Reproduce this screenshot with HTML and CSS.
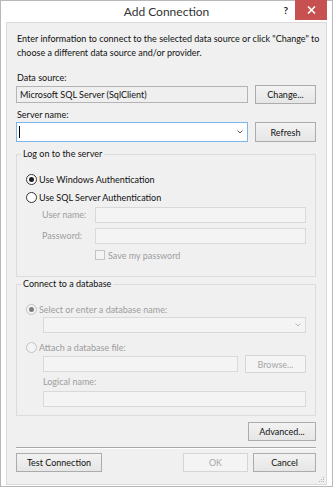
FILE: index.html
```html
<!DOCTYPE html>
<html lang="en">
<head>
    <meta charset="UTF-8">
    <title>Add Connection</title>
    <link rel="stylesheet" href="styles.css">
</head>
<body>
    <div class="window">
        <div class="titlebar">
            <div class="title">Add Connection</div>
            <div class="controls">
                <div class="help">?</div>
                <div class="close">
                    <svg width="9" height="8" viewBox="0 0 9 8"><path d="M1 0.5 L8 7.5 M8 0.5 L1 7.5" stroke="#fff" stroke-width="1.6"/></svg>
                </div>
            </div>
        </div>

        <div class="client">
            <p class="intro">Enter information to connect to the selected data source or click "Change" to<br>choose a different data source and/or provider.</p>

            <div class="label top-label">Data source:</div>
            <div class="row">
                <div class="textbox readonly">Microsoft SQL Server (SqlClient)</div>
                <button class="btn side-btn">Change...</button>
            </div>

            <div class="label server-label">Server name:</div>
            <div class="row server-row">
                <div class="combo focused">
                    <span class="caret"></span>
                    <svg class="chevron" width="6" height="4" viewBox="0 0 6 4"><path d="M0.5 0.5 L3 3 L5.5 0.5" fill="none" stroke="#555" stroke-width="1"/></svg>
                </div>
                <button class="btn side-btn">Refresh</button>
            </div>

            <fieldset class="group logon">
                <legend>Log on to the server</legend>
                <div class="group-body">
                    <div class="radio-row"><span class="radio checked"></span>Use Windows Authentication</div>
                    <div class="radio-row"><span class="radio"></span>Use SQL Server Authentication</div>
                    <div class="field-row user-row">
                        <span class="field-label disabled">User name:</span>
                        <div class="textbox disabled-box"></div>
                    </div>
                    <div class="field-row pass-row">
                        <span class="field-label disabled">Password:</span>
                        <div class="textbox disabled-box"></div>
                    </div>
                    <div class="check-row disabled"><span class="checkbox"></span>Save my password</div>
                </div>
            </fieldset>

            <fieldset class="group database">
                <legend>Connect to a database</legend>
                <div class="group-body">
                    <div class="radio-row short disabled"><span class="radio checked off"></span>Select or enter a database name:</div>
                    <div class="combo disabled-box indent">
                        <svg class="chevron" width="6" height="4" viewBox="0 0 6 4"><path d="M0.5 0.5 L3 3 L5.5 0.5" fill="none" stroke="#b5b5b5" stroke-width="1"/></svg>
                    </div>
                    <div class="radio-row short attach disabled"><span class="radio off"></span>Attach a database file:</div>
                    <div class="row indent file-row">
                        <div class="textbox disabled-box"></div>
                        <button class="btn browse-btn" disabled>Browse...</button>
                    </div>
                    <div class="label indent logical-label disabled">Logical name:</div>
                    <div class="textbox disabled-box indent logical-box"></div>
                </div>
            </fieldset>

            <div class="advanced-row">
                <button class="btn advanced-btn">Advanced...</button>
            </div>

            <div class="separator"></div>

            <div class="button-row">
                <button class="btn test-btn">Test Connection</button>
                <button class="btn ok-btn" disabled>OK</button>
                <button class="btn cancel-btn">Cancel</button>
            </div>

            <svg class="grip" width="7" height="7" viewBox="0 0 7 7">
                <rect x="5" y="1" width="1" height="1" fill="#b0b0b0"/>
                <rect x="3" y="3" width="1" height="1" fill="#b0b0b0"/>
                <rect x="5" y="3" width="1" height="1" fill="#b0b0b0"/>
                <rect x="1" y="5" width="1" height="1" fill="#b0b0b0"/>
                <rect x="3" y="5" width="1" height="1" fill="#b0b0b0"/>
                <rect x="5" y="5" width="1" height="1" fill="#b0b0b0"/>
            </svg>
        </div>
    </div>
</body>
</html>
```

FILE: styles.css
```css
* {
    box-sizing: border-box;
}
body {
    margin: 0;
    background: #fff;
    color: #111;
    font-family: Lato, "Open Sans", sans-serif;
    font-size: 9px;
}
.window {
    width: 333px;
    height: 487px;
    border: 1px solid #b8b8b8;
    background: #fff;
    display: flex;
    flex-direction: column;
}

/* title bar */
.titlebar {
    height: 21px;
    display: grid;
    grid-template-columns: 1fr auto 1fr;
    align-items: start;
}
.title {
    grid-column: 2;
    font-size: 12px;
    line-height: 21px;
    color: #333;
}
.controls {
    grid-column: 3;
    justify-self: end;
    display: flex;
}
.help {
    font-weight: bold;
    font-size: 10px;
    line-height: 18px;
    color: #222;
    margin-right: 7px;
}
.close {
    width: 32px;
    height: 20px;
    margin-top: -1px;
    margin-right: 5px;
    background: #c75050;
    display: flex;
    align-items: center;
    justify-content: center;
}

/* dialog body */
.client {
    flex: 1;
    margin: 0 5px 1px 5px;
    border: 1px solid #dadada;
    background: #f0f0f0;
    padding: 9px 10px 0 9px;
    display: flex;
    flex-direction: column;
    position: relative;
}
.intro {
    margin: 0;
    line-height: 14px;
    padding-left: 1px;
    white-space: nowrap;
}
.label {
    line-height: 14px;
    padding-left: 1px;
}
.top-label {
    margin-top: 11px;
}
.server-label {
    margin-top: 4px;
}
.row {
    display: flex;
    align-items: center;
    gap: 7px;
}
.server-row {
    height: 20px;
}
.textbox {
    flex: 1;
    height: 16px;
    border: 1px solid #d9d9d9;
    background: #f4f4f4;
    line-height: 14px;
    padding-left: 3px;
}
.textbox.readonly {
    height: 17px;
    border-color: #b4b4b4;
    background: #efefef;
    line-height: 15px;
}
.combo {
    flex: 1;
    height: 20px;
    border: 1px solid #7eb4ea;
    background: #fff;
    display: flex;
    align-items: center;
    padding: 0 3px 0 2px;
}
.caret {
    width: 1px;
    height: 12px;
    background: #000;
}
.chevron {
    margin-left: auto;
    margin-right: 1px;
}

/* buttons */
.btn {
    height: 19px;
    padding: 0;
    border: 1px solid #acacac;
    background: linear-gradient(#f2f2f2, #e6e6e6);
    font: inherit;
    color: #111;
    text-align: center;
}
.btn:disabled {
    border-color: #d5d5d5;
    background: #f4f4f4;
    color: #a6a6a6;
}
.side-btn {
    width: 61px;
}
.server-row .side-btn {
    height: 20px;
}

/* group boxes */
.group {
    margin: 0;
    padding: 0;
    border: 1px solid #dcdcdc;
    min-width: 0;
}
.group legend {
    padding: 0 2px;
    margin-left: 4px;
    line-height: 14px;
}
.logon {
    margin-top: 5px;
}
.logon .group-body {
    padding: 9px 9px 14px 9px;
}
.database .group-body {
    padding: 10px 9px 8px 9px;
}
.radio-row {
    display: flex;
    align-items: center;
    height: 18px;
    gap: 2px;
}
.radio-row.short {
    height: 16px;
}
.radio {
    width: 11px;
    height: 11px;
    border: 1px solid #333;
    border-radius: 50%;
    background: #fff;
    display: flex;
    align-items: center;
    justify-content: center;
}
.radio.checked::after {
    content: "";
    width: 5px;
    height: 5px;
    border-radius: 50%;
    background: #1e1e1e;
}
.radio.off {
    border-color: #c2c2c2;
    background: #f4f4f4;
}
.radio.off.checked::after {
    background: #7d7d7d;
}
.disabled {
    color: #9d9d9d;
}
.field-row {
    display: flex;
    align-items: center;
    margin-left: 16px;
}
.user-row {
    margin-top: 1px;
}
.pass-row {
    margin-top: 5px;
}
.field-label {
    width: 53px;
    line-height: 14px;
}
.check-row {
    display: flex;
    align-items: center;
    gap: 3px;
    height: 14px;
    margin-top: 4px;
    margin-left: 69px;
}
.checkbox {
    width: 10px;
    height: 10px;
    border: 1px solid #c4c4c4;
    background: #f4f4f4;
}
.indent {
    margin-left: 17px;
}
.database .combo {
    flex: none;
    height: 16px;
    border-color: #d9d9d9;
    background: #f4f4f4;
}
.attach {
    margin-top: 6px;
}
.file-row {
    height: 18px;
}
.browse-btn {
    width: 61px;
    height: 18px;
    color: #9d9d9d;
}
.logical-label {
    margin-top: 2px;
    padding-left: 0;
}
.logical-box {
    flex: none;
    margin-top: 2px;
}

/* bottom */
.advanced-row {
    display: flex;
    justify-content: flex-end;
    margin-top: 6px;
}
.advanced-btn {
    width: 68px;
}
.separator {
    margin-top: 6px;
    border-top: 1px solid #a8a8a8;
    border-bottom: 1px solid #fff;
}
.button-row {
    display: flex;
    gap: 5px;
    margin-top: 4px;
}
.test-btn {
    width: 86px;
    margin-right: auto;
}
.ok-btn {
    width: 65px;
}
.cancel-btn {
    width: 63px;
}
.grip {
    position: absolute;
    right: 1px;
    bottom: 1px;
}
```
